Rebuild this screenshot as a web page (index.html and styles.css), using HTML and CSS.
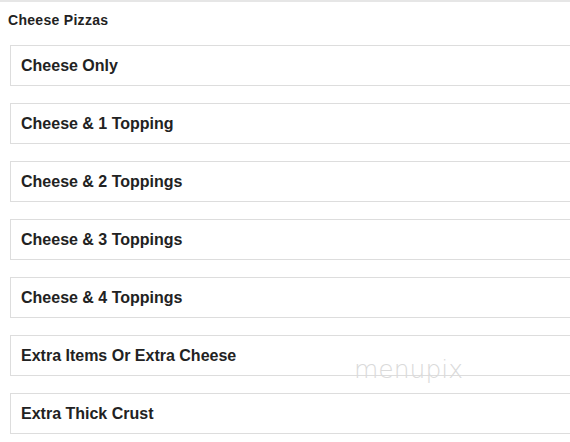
FILE: index.html
```html
<!DOCTYPE html>
<html lang="en">
<head>
    <meta charset="UTF-8">
    <title>Cheese Pizzas</title>
    <link rel="stylesheet" href="styles.css">
</head>
<body>
    <!-- Menu Section -->
    <section class="menu-section">
        <h2 class="section-title">Cheese Pizzas</h2>

        <ul class="item-list">
            <li class="item">Cheese Only</li>
            <li class="item">Cheese &amp; 1 Topping</li>
            <li class="item">Cheese &amp; 2 Toppings</li>
            <li class="item">Cheese &amp; 3 Toppings</li>
            <li class="item">Cheese &amp; 4 Toppings</li>
            <li class="item">Extra Items Or Extra Cheese</li>
            <li class="item">Extra Thick Crust</li>
        </ul>

        <!-- Watermark -->
        <div class="watermark">menupix</div>
    </section>
</body>
</html>
```

FILE: styles.css
```css
/* Base Reset */
* {
    margin: 0;
    padding: 0;
    box-sizing: border-box;
}

body {
    font-family: "Liberation Sans", Arial, sans-serif;
    background-color: #fff;
    color: #222;
    overflow: hidden;
}

.menu-section {
    position: relative;
    border-top: 2px solid #e6e6e6;
    padding-top: 10px;
}

.section-title {
    font-size: 14px;
    font-weight: bold;
    letter-spacing: 0.3px;
    color: #222;
    padding-left: 8px;
    line-height: 16px;
    margin-bottom: 17px;
}

.item-list {
    list-style: none;
    display: flex;
    flex-direction: column;
    gap: 17px;
    margin-left: 10px;
}

.item {
    height: 41px;
    border: 1px solid #ddd;
    border-right: none;
    padding-left: 10px;
    display: flex;
    align-items: center;
    font-size: 16px;
    font-weight: bold;
    color: #222;
}

.watermark {
    position: absolute;
    left: 354px;
    top: 353px;
    font-family: "DejaVu Sans", sans-serif;
    font-weight: 200;
    font-size: 25px;
    color: #dadada;
}
```
